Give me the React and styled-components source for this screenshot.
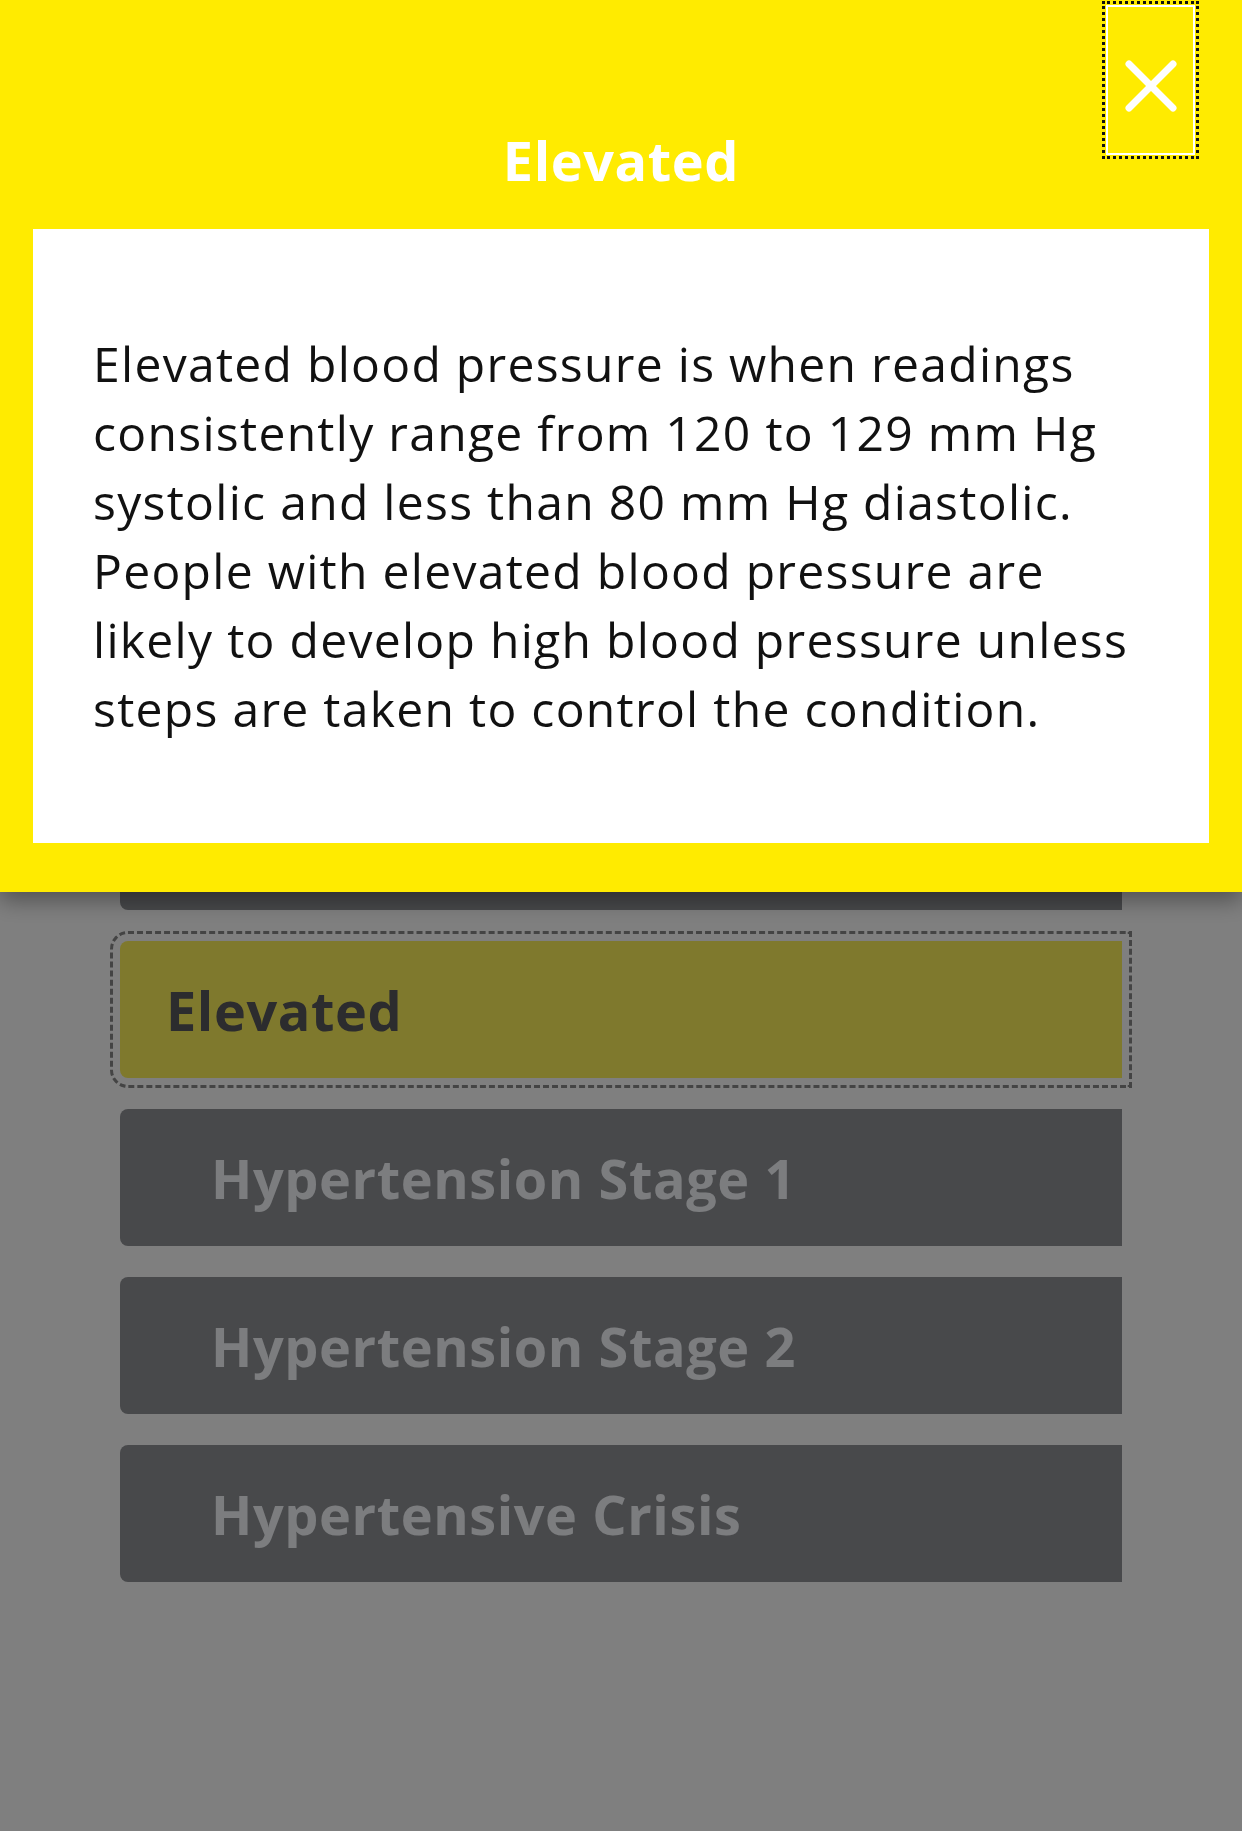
import React from 'react';
import styled, { createGlobalStyle, css } from 'styled-components';

const FONT = `"Open Sans", "Noto Sans", Lato, sans-serif`;

const Global = createGlobalStyle`
  html, body { margin: 0; padding: 0; background: #fff; }
  body { font-family: ${FONT}; }
  * { box-sizing: border-box; }
`;

const Page = styled.main`
  min-height: 1831px;
  background: #fff;
  padding: 773px 120px 0;
`;

const List = styled.ul`
  list-style: none;
  margin: 0;
  padding: 0;
  display: flex;
  flex-direction: column;
  gap: 31px;
`;

const Item = styled.li`
  height: 137px;
  display: flex;
  align-items: center;
  padding-left: ${(p) => (p.$selected ? 46 : 91)}px;
  border-radius: 8px 0 0 8px;
  background: ${(p) => (p.$selected ? '#fef25a' : '#909296')};
  color: ${(p) => (p.$selected ? '#58585c' : '#f8fafe')};
  font: 700 54px/1 ${FONT};
  letter-spacing: 0.6px;
  ${(p) =>
    p.$selected &&
    css`
      outline: 3px dashed #888;
      outline-offset: 7px;
    `}
`;

const Backdrop = styled.div`
  position: fixed;
  inset: 0;
  background: rgba(0, 0, 0, 0.5);
  z-index: 1;
`;

const Dialog = styled.section`
  position: fixed;
  top: 0;
  left: 0;
  right: 0;
  z-index: 2;
  background: #ffeb00;
  padding: 0 33px 49px;
  box-shadow: 0 8px 22px rgba(0, 0, 0, 0.38);
`;

const Title = styled.h2`
  margin: 0;
  padding: 128px 0 37px;
  text-align: center;
  color: #fff;
  font: 700 54px/64px ${FONT};
  letter-spacing: 0.6px;
`;

const Body = styled.div`
  background: #fff;
  padding: 100px 60px;
  color: #111;
  font: 400 48px/69px ${FONT};
  letter-spacing: 1.3px;
  margin: 0;
`;

const CloseButton = styled.button`
  position: absolute;
  top: 5px;
  right: 47px;
  width: 89px;
  height: 150px;
  padding: 12px 0 0;
  display: flex;
  align-items: center;
  justify-content: center;
  background: transparent;
  border: 2px solid #fff;
  outline: 3px dotted #111;
  outline-offset: 1px;
  cursor: pointer;
`;

const CloseIcon = () => (
  <svg width="52" height="52" viewBox="0 0 52 52" aria-hidden="true">
    <g stroke="#fff" strokeWidth="7" strokeLinecap="round">
      <line x1="4" y1="4" x2="48" y2="48" />
      <line x1="48" y1="4" x2="4" y2="48" />
    </g>
  </svg>
);

const categories = [
  'Normal',
  'Elevated',
  'Hypertension Stage 1',
  'Hypertension Stage 2',
  'Hypertensive Crisis',
];

export default function App() {
  return (
    <>
      <Global />
      <Page>
        <List>
          {categories.map((c) => (
            <Item key={c} $selected={c === 'Elevated'}>
              {c}
            </Item>
          ))}
        </List>
      </Page>
      <Backdrop />
      <Dialog role="dialog" aria-label="Elevated">
        <Title>Elevated</Title>
        <Body>
          Elevated blood pressure is when readings consistently range from 120
          to 129 mm Hg systolic and less than 80 mm Hg diastolic. People with
          elevated blood pressure are likely to develop high blood pressure
          unless steps are taken to control the condition.
        </Body>
        <CloseButton aria-label="Close">
          <CloseIcon />
        </CloseButton>
      </Dialog>
    </>
  );
}
